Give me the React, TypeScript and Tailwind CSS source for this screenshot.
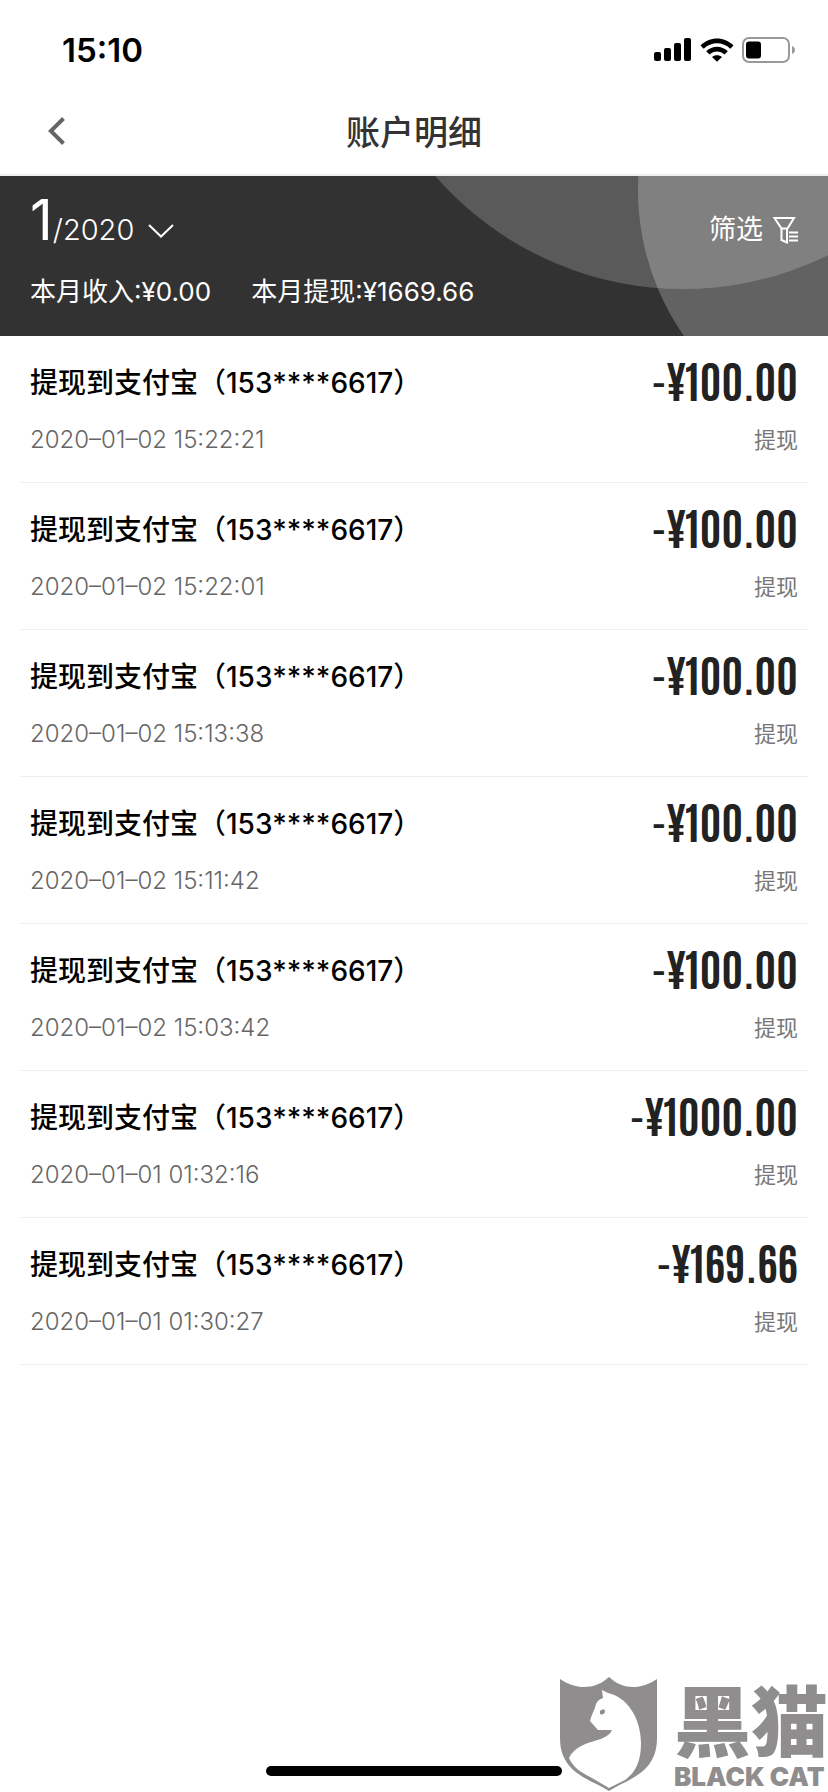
import React from 'react';

interface Transaction {
  id: number;
  title: string;
  time: string;
  amount: string;
  type: string;
}

const transactions: Transaction[] = [
  { id: 1, title: '提现到支付宝（153****6617）', time: '2020–01–02 15:22:21', amount: '-¥100.00', type: '提现' },
  { id: 2, title: '提现到支付宝（153****6617）', time: '2020–01–02 15:22:01', amount: '-¥100.00', type: '提现' },
  { id: 3, title: '提现到支付宝（153****6617）', time: '2020–01–02 15:13:38', amount: '-¥100.00', type: '提现' },
  { id: 4, title: '提现到支付宝（153****6617）', time: '2020–01–02 15:11:42', amount: '-¥100.00', type: '提现' },
  { id: 5, title: '提现到支付宝（153****6617）', time: '2020–01–02 15:03:42', amount: '-¥100.00', type: '提现' },
  { id: 6, title: '提现到支付宝（153****6617）', time: '2020–01–01 01:32:16', amount: '-¥1000.00', type: '提现' },
  { id: 7, title: '提现到支付宝（153****6617）', time: '2020–01–01 01:30:27', amount: '-¥169.66', type: '提现' },
];

const StatusBar = () => (
  <div className="flex h-[88px] items-center justify-between pt-3 pr-8 pl-[62px]">
    <span className="text-[33px] leading-none font-semibold text-black">15:10</span>
    <div className="flex items-center gap-2">
      <svg width="38" height="24" viewBox="0 0 38 24" aria-hidden="true">
        <rect x="0" y="14" width="7" height="9" rx="2" />
        <rect x="10" y="10" width="7" height="13" rx="2" />
        <rect x="20" y="5" width="7" height="18" rx="2" />
        <rect x="30" y="0" width="7" height="23" rx="2" />
      </svg>
      <svg width="34" height="24" viewBox="0 0 34 24" aria-hidden="true">
        <path d="M0.5 7.5C9.8 -1.8 24.2 -1.8 33.5 7.5L30.3 10.8C22.8 3.4 11.2 3.4 3.7 10.8Z" />
        <path d="M6.2 13.3C12.3 7.3 21.7 7.3 27.8 13.3L24.5 16.6C20.2 12.5 13.8 12.5 9.5 16.6Z" />
        <path d="M12 19C14.8 16.6 19.2 16.6 22 19L17 23.8Z" />
      </svg>
      <svg width="54" height="26" viewBox="0 0 54 26" aria-hidden="true">
        <rect x="1" y="1" width="46" height="24" rx="6" fill="none" stroke="#999" strokeWidth="2" />
        <rect x="4" y="4.5" width="15" height="17" rx="3" />
        <path d="M50 9C54 10.5 54 15.5 50 17Z" fill="#999" />
      </svg>
    </div>
  </div>
);

const NavBar = () => (
  <header className="grid h-[88px] grid-cols-[1fr_auto_1fr] items-center border-b-2 border-[#efefef] px-10">
    <button type="button" aria-label="返回" className="justify-self-start p-2">
      <svg width="17" height="28" viewBox="0 0 17 28" fill="none" stroke="#666" strokeWidth="4" aria-hidden="true">
        <path d="M15.5 1.5L2.8 14L15.5 26.5" />
      </svg>
    </button>
    <h1 className="pt-1 text-[34px] leading-none font-medium text-[#333]">账户明细</h1>
  </header>
);

const Summary = () => (
  <section className="relative h-40 bg-[#323232] text-white">
    {/* Overlapping translucent circles */}
    <svg
      className="absolute inset-0 h-full w-full"
      viewBox="0 0 828 160"
      preserveAspectRatio="xMaxYMin slice"
      aria-hidden="true"
    >
      <circle cx="683" cy="-215" r="328" fill="#fff" fillOpacity="0.195" />
      <circle cx="893" cy="14" r="255" fill="#fff" fillOpacity="0.234" />
    </svg>
    <div className="relative flex h-full flex-col justify-between px-[30px] pt-4 pb-7">
      <div className="flex items-end justify-between">
        <button type="button" className="flex items-baseline">
          <span className="text-[56px] leading-[56px]">1</span>
          <span className="text-[29px] leading-10 font-light">/2020</span>
          <svg
            className="ml-3.5"
            width="26"
            height="16"
            viewBox="0 0 26 16"
            fill="none"
            stroke="currentColor"
            strokeWidth="2"
            aria-hidden="true"
          >
            <path d="M1 1L13 12.5L25 1" />
          </svg>
        </button>
        <button type="button" className="flex items-center gap-2.5 text-[27px] leading-10">
          筛选
          <svg width="25" height="28" viewBox="0 0 25 28" fill="none" stroke="currentColor" strokeWidth="2" aria-hidden="true">
            <path d="M1.5 2H21L14.5 12.5H8.5Z" />
            <path d="M8.5 12.5V24L14 26.5V12.5" />
            <path d="M16 16.5H25M16 20.5H25M16 24.5H25" />
          </svg>
        </button>
      </div>
      <div className="flex gap-10 text-[26px] leading-8">
        <span>本月收入:¥0.00</span>
        <span>本月提现:¥1669.66</span>
      </div>
    </div>
  </section>
);

const TransactionItem = ({ item }: { item: Transaction }) => (
  <li className="mx-5 flex h-[147px] justify-between border-b border-[#eee] px-2.5 pt-6">
    <div>
      <p className="text-[28px] leading-[46px] font-medium text-black">{item.title}</p>
      <time className="mt-4 block text-2xl leading-9 font-light text-[#666]">{item.time}</time>
    </div>
    <div className="text-right">
      <p className="font-['Antonio','Bebas_Neue','Roboto_Condensed',sans-serif] text-[44px] leading-[38px] font-bold text-[#222]">
        {item.amount}
      </p>
      <p className="mt-6 text-[22px] leading-9 text-[#777]">{item.type}</p>
    </div>
  </li>
);

const Watermark = () => (
  <div className="absolute right-0 bottom-0 flex items-end gap-4 text-[#8f8d8e]">
    <svg width="99" height="116" viewBox="0 0 99 116" aria-hidden="true">
      <path
        d="M1 3C17 14 36 14 50 1C64 14 82 14 98 3V62C98 98 68 103 50 115C32 103 1 98 1 62Z"
        fill="currentColor"
      />
      <path
        d="M43 14L49 17C68 21 82 42 82 67C82 85 77 96 66 104L50 112L33 102C21 96 14 91 10 82C20 62 47 68 53 54H39L31 45C32 39 36 34 37 28C38 25 41 23 44 22Z"
        fill="#fff"
      />
      <path d="M41 35C43 33 46 33 46 35C46 38 43 39 41 38Z" fill="currentColor" />
    </svg>
    <div className="flex flex-col">
      <span className="text-[77px] leading-[76px] font-black">黑猫</span>
      <span className="text-[26px] leading-[31px] font-black">BLACK CAT</span>
    </div>
  </div>
);

const App = () => {
  return (
    <div className="relative flex min-h-screen flex-col overflow-hidden bg-white font-['Inter','Noto_Sans_CJK_SC',sans-serif]">
      <StatusBar />
      <NavBar />
      <main>
        <Summary />
        <ul>
          {transactions.map((item) => (
            <TransactionItem key={item.id} item={item} />
          ))}
        </ul>
      </main>
      {/* Home indicator */}
      <div className="mx-auto mt-auto mb-4 h-2.5 w-[296px] rounded-full bg-black" />
      <Watermark />
    </div>
  );
};

export default App;
